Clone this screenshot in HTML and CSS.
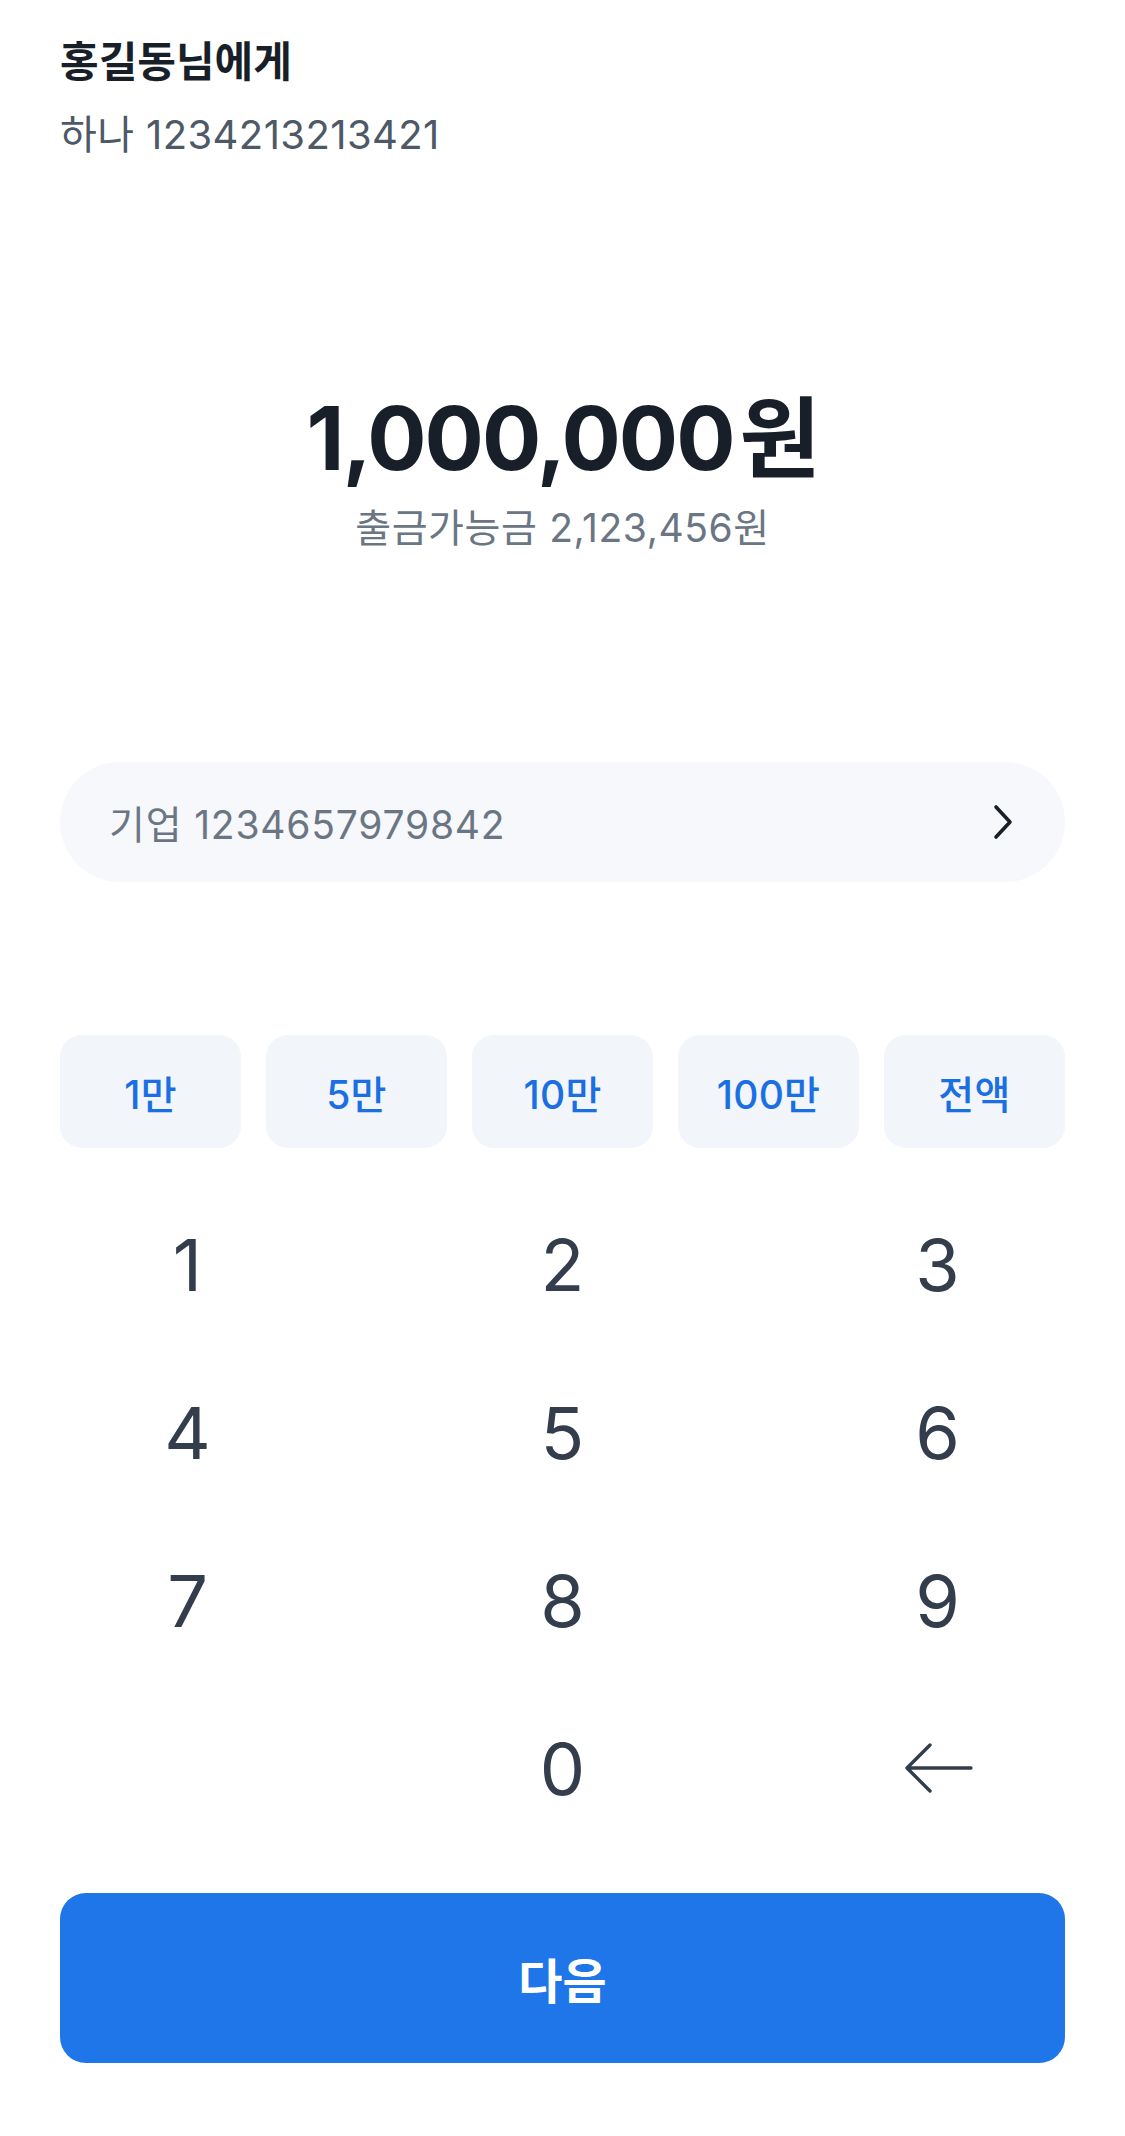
FILE: index.html
```html
<!DOCTYPE html>
<html lang="ko">
<head>
<meta charset="utf-8">
<title>송금</title>
<link rel="stylesheet" href="styles.css">
</head>
<body>
<div class="screen">
  <header class="recipient">
    <div class="recipient-name">홍길동님에게</div>
    <div class="recipient-account">하나 1234213213421</div>
  </header>

  <section class="amount">
    <div class="amount-value">1,000,000<span class="won">원</span></div>
    <div class="amount-available">출금가능금 2,123,456원</div>
  </section>

  <div class="account-select">
    <span class="account-text">기업 1234657979842</span>
    <svg class="chevron" width="24" height="36" viewBox="0 0 24 36" aria-hidden="true">
      <path d="M5 3 L19 18 L5 33" fill="none" stroke="#191f28" stroke-width="3.6" stroke-linecap="round" stroke-linejoin="round"/>
    </svg>
  </div>

  <div class="chips">
    <button class="chip">1만</button>
    <button class="chip">5만</button>
    <button class="chip">10만</button>
    <button class="chip">100만</button>
    <button class="chip">전액</button>
  </div>

  <div class="keypad">
    <button class="key">1</button>
    <button class="key">2</button>
    <button class="key">3</button>
    <button class="key">4</button>
    <button class="key">5</button>
    <button class="key">6</button>
    <button class="key">7</button>
    <button class="key">8</button>
    <button class="key">9</button>
    <span class="key key-empty"></span>
    <button class="key">0</button>
    <button class="key" aria-label="지우기">
      <svg width="72" height="50" viewBox="0 0 72 50" aria-hidden="true">
        <path d="M69 25 H6 M28 2 L5 25 L28 48" fill="none" stroke="#333d4b" stroke-width="3.4" stroke-linecap="round" stroke-linejoin="round"/>
      </svg>
    </button>
  </div>

  <div class="footer">
    <button class="next">다음</button>
  </div>
</div>
</body>
</html>
```

FILE: styles.css
```css
* { box-sizing: border-box; }

html, body {
  margin: 0;
  padding: 0;
  background: #ffffff;
}

body {
  font-family: Inter, "Noto Sans CJK KR", sans-serif;
  color: #191f28;
}

.screen {
  width: 1125px;
  height: 2136px;
  display: flex;
  flex-direction: column;
  padding: 36px 0 0;
}

.recipient {
  padding: 0 60px;
}

.recipient-name {
  font-size: 42px;
  font-weight: 700;
  line-height: 52px;
  color: #191f28;
  letter-spacing: 0;
}

.recipient-account {
  margin-top: 21px;
  font-size: 40px;
  line-height: 52px;
  color: #4e5968;
  letter-spacing: 0.4px;
}

.amount {
  margin-top: 227px;
  display: flex;
  flex-direction: column;
  align-items: center;
}

.amount-value {
  font-size: 88px;
  font-weight: 700;
  line-height: 100px;
  color: #191f28;
  letter-spacing: -2px;
}

.won {
  margin-left: 6px;
}

.amount-available {
  margin-top: 15px;
  font-size: 39px;
  line-height: 50px;
  color: #6b7684;
  letter-spacing: 0.6px;
}

.account-select {
  margin: 209px 60px 0;
  height: 120px;
  border-radius: 60px;
  background: #f7f8fb;
  display: flex;
  align-items: center;
  justify-content: space-between;
  padding: 0 44px 0 49px;
}

.chevron {
  margin-right: 6px;
}

.account-text {
  font-size: 39px;
  color: #6b7684;
  letter-spacing: 0.8px;
}

.chips {
  margin: 153px 60px 0;
  display: grid;
  grid-template-columns: repeat(5, 1fr);
  gap: 25px;
}

.chip {
  height: 113px;
  border: 0;
  border-radius: 22px;
  background: #f2f5fa;
  color: #1a6fe3;
  font-family: Inter, "Noto Sans CJK KR", sans-serif;
  font-size: 39px;
  font-weight: 500;
  letter-spacing: 0.3px;
  padding: 0;
}

.keypad {
  margin-top: 32px;
  display: grid;
  grid-template-columns: repeat(3, 1fr);
  grid-auto-rows: 168px;
}

.key {
  border: 0;
  background: transparent;
  padding: 0;
  display: flex;
  align-items: center;
  justify-content: center;
  font-family: Inter, "Noto Sans CJK KR", sans-serif;
  font-size: 72px;
  font-weight: 400;
  color: #333d4b;
}

.footer {
  margin-top: 41px;
  padding: 0 60px;
}

.next {
  width: 100%;
  height: 170px;
  border: 0;
  border-radius: 26px;
  background: #1e76e8;
  color: #ffffff;
  font-family: Inter, "Noto Sans CJK KR", sans-serif;
  font-size: 48px;
  font-weight: 700;
  letter-spacing: 0;
}
```
